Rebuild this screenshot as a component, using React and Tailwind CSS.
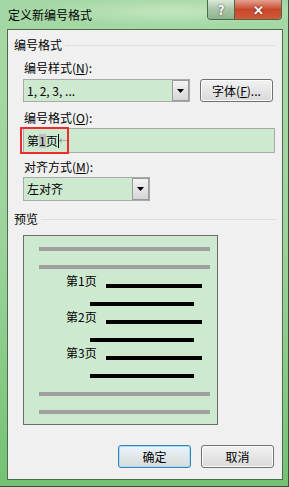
import React from "react";

const font = { fontFamily: '"Noto Sans CJK SC", "Liberation Sans", sans-serif' };

function Arrow() {
  return (
    <svg width="7" height="4" viewBox="0 0 7 4">
      <path d="M0 0h7L3.5 4z" fill="#000" />
    </svg>
  );
}

function Combo({ width, height, text }) {
  return (
    <div
      className="flex border border-[#a9a9a9] bg-[#cde9cf]"
      style={{ width, height }}
    >
      <div className="flex flex-1 items-center pl-[3px] text-[12px] leading-[14px] text-black">
        {text}
      </div>
      <div className="flex w-[17px] items-center justify-center border border-[#9a9a9a] bg-gradient-to-b from-[#f3f3f3] to-[#d6d6d6]">
        <Arrow />
      </div>
    </div>
  );
}

function Btn({ children, primary }) {
  return (
    <div
      className={
        "flex h-[23px] w-[73px] items-center justify-center rounded-[3px] border text-[12px] leading-[14px] text-black " +
        (primary
          ? "border-[#3c7fb1] bg-gradient-to-b from-[#eaf6fd] to-[#d9d9d9] shadow-[inset_0_0_0_1px_#9ee0f9]"
          : "border-[#707070] bg-gradient-to-b from-[#f2f2f2] to-[#d9d9d9] shadow-[inset_0_0_0_1px_#fbfbfb]")
      }
    >
      {children}
    </div>
  );
}

function GroupLabel({ children }) {
  return (
    <div className="flex h-[14px] items-center pl-[6px] pr-[6px]">
      <span className="text-[12px] leading-[14px] text-black">{children}</span>
      <div className="ml-[3px] h-px flex-1 bg-[#d5dfe5]" />
    </div>
  );
}

function Label({ children, className = "" }) {
  return (
    <div className={"h-[14px] pl-[16px] text-[12px] leading-[14px] text-black " + className}>
      {children}
    </div>
  );
}

function Line({ ml, w, gray, mt }) {
  return (
    <div
      className={gray ? "h-[4px] bg-[#a0a0a0]" : "h-[4px] bg-black"}
      style={{ marginLeft: ml, width: w, marginTop: mt }}
    />
  );
}

function Entry({ n, mt }) {
  return (
    <div className="flex h-[14px] items-end" style={{ marginTop: mt }}>
      <span className="ml-[42px] w-[40px] text-[12px] leading-[14px] text-black">第{n}页</span>
      <div className="h-[4px] w-[96px] bg-black" />
    </div>
  );
}

export default function App() {
  return (
    <div
      className="relative flex h-[487px] w-[289px] flex-col overflow-hidden bg-gradient-to-b from-[#a8d9a8] via-[#9bd39b] to-[#74c274] select-none"
      style={font}
    >
      {/* title bar */}
      <div className="flex h-[29px] bg-[radial-gradient(ellipse_at_60%_40%,#c2e6bf_0%,#a6d8a6_55%,#a1d6a1_100%)]">
        <div className="pl-[8px] pt-[8px] text-[12px] leading-[14px] text-black">定义新编号格式</div>
        <div className="ml-auto mr-[7px] flex h-[20px] overflow-hidden rounded-b-[4px] border border-t-0 border-[#4a6a4a]">
          <div className="flex w-[27px] items-center justify-center border-r border-[#4a6a4a] bg-gradient-to-b from-[#dce9da] via-[#a9c5a6] to-[#8fb48c] text-[13px] font-bold leading-[14px] text-white [text-shadow:0_0_2px_#333]">
            ?
          </div>
          <div className="flex w-[46px] items-center justify-center bg-gradient-to-b from-[#e4a08f] via-[#c8482c] to-[#d2593a] text-[13px] font-bold leading-[14px] text-white [text-shadow:0_0_2px_#400]">
            ✕
          </div>
        </div>
      </div>

      {/* client area */}
      <div className="ml-[7px] mr-[6px] flex h-[451px] flex-col border border-[#4e6b4e] bg-[#f0f0f0]">
        <div className="mt-[8px]">
          <GroupLabel>编号格式</GroupLabel>
        </div>
        <Label className="mt-[9px]">
          编号样式(<span className="underline">N</span>):
        </Label>
        <div className="mt-[4px] flex pl-[15px]">
          <Combo width={167} height={23} text="1, 2, 3, ..." />
          <div className="ml-[10px]">
            <Btn>
              字体(<span className="underline">F</span>)...
            </Btn>
          </div>
        </div>
        <Label className="mt-[9px]">
          编号格式(<span className="underline">O</span>):
        </Label>
        <div className="relative mt-[3px] ml-[15px] flex h-[25px] w-[252px] items-center border border-[#a9a9a9] bg-[#cde9cf] pl-[3px] text-[12px] leading-[14px] text-black">
          <span>第</span>
          <span className="bg-[#c0c0c0]">1</span>
          <span>页</span>
          <span className="h-[14px] w-px bg-black" />
          <span className="text-[9px] leading-[10px] text-[#888]">←</span>
          <div className="absolute left-[-4px] top-[-2px] h-[27px] w-[49px] border-2 border-[#ee2a2a]" />
        </div>
        <Label className="mt-[7px]">
          对齐方式(<span className="underline">M</span>):
        </Label>
        <div className="mt-[3px] pl-[15px]">
          <Combo width={127} height={24} text="左对齐" />
        </div>
        <div className="mt-[11px]">
          <GroupLabel>预览</GroupLabel>
        </div>
        <div className="mt-[9px] ml-[15px] flex h-[190px] w-[195px] flex-col border border-[#6d6d6d] bg-[#cde9cf] pt-[11px]">
          <Line gray ml={15} w={171} />
          <Line gray ml={15} w={171} mt={14} />
          <Entry n={1} mt={5} />
          <Line ml={66} w={104} mt={14} />
          <Entry n={2} mt={4} />
          <Line ml={66} w={104} mt={14} />
          <Entry n={3} mt={4} />
          <Line ml={66} w={104} mt={14} />
          <Line gray ml={15} w={171} mt={14} />
          <Line gray ml={15} w={171} mt={14} />
        </div>
        <div className="mt-[20px] flex justify-end gap-[10px] pr-[8px]">
          <Btn primary>确定</Btn>
          <Btn>取消</Btn>
        </div>
      </div>
      <div className="absolute bottom-0 left-0 right-0 h-px bg-[#3d4f3d]" />
      <div className="absolute bottom-0 right-0 top-0 w-px bg-[#3d4f3d]" />
    </div>
  );
}
